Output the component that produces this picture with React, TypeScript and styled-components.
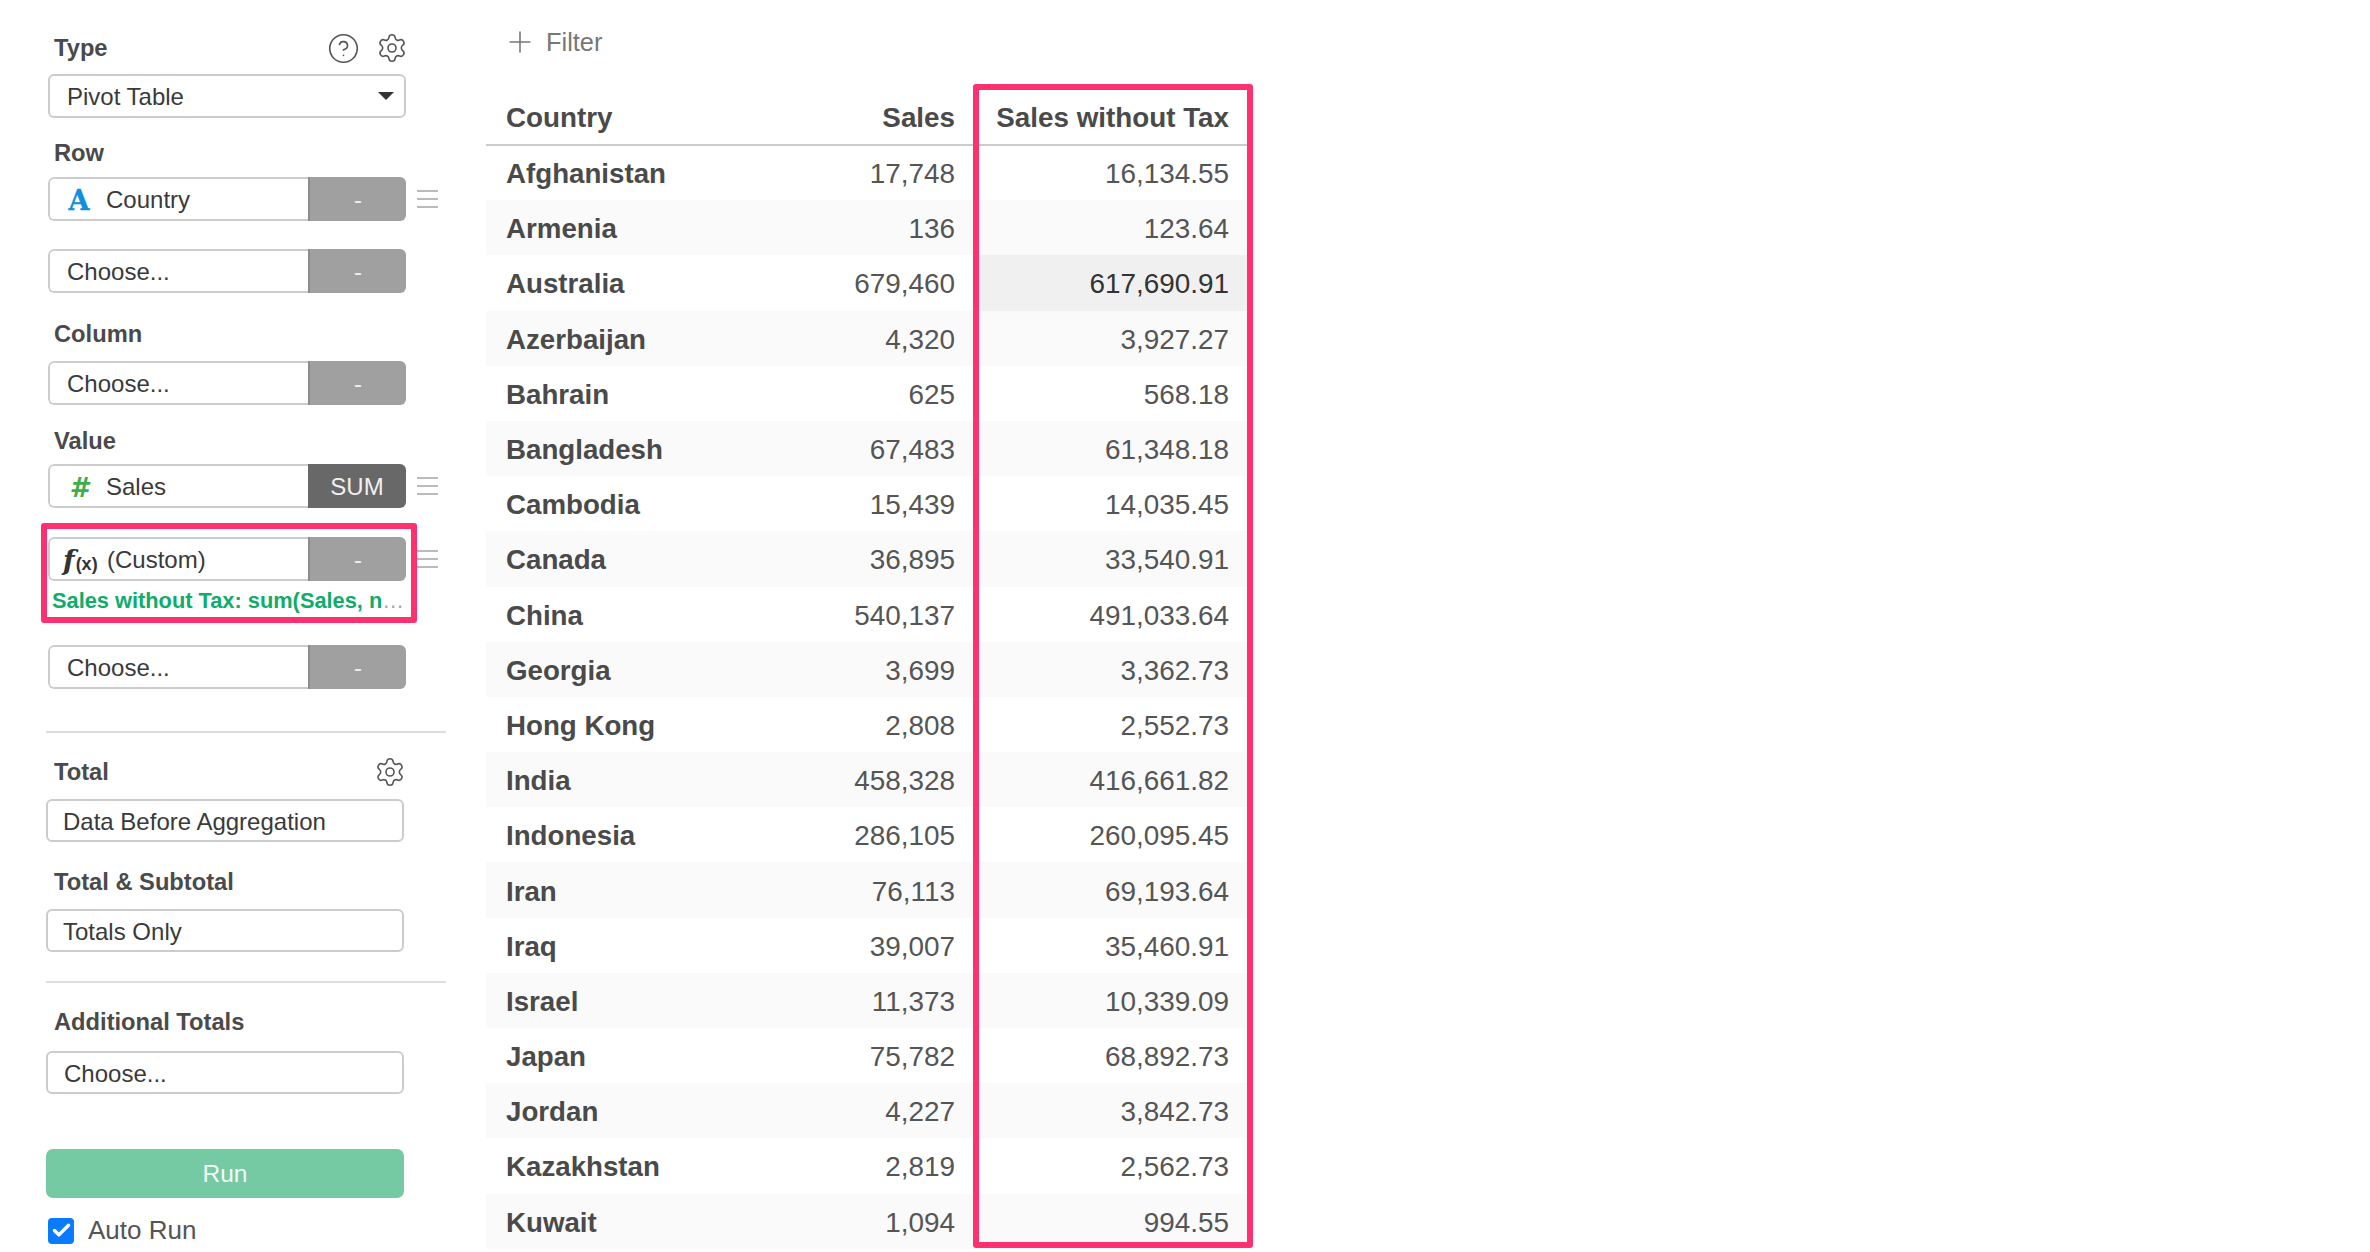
import React from "react";
import styled, { createGlobalStyle } from "styled-components";
import { Check, CircleHelp, Plus, Settings } from "lucide-react";

const Global = createGlobalStyle`
  html, body { margin: 0; padding: 0; background: #fff; }
  body { font-family: "Liberation Sans", Arial, sans-serif; color: #4a4a4a; }
`;

const Page = styled.div`
  display: flex;
  width: 2370px;
  height: 1252px;
  overflow: hidden;
  padding-left: 46px;
  box-sizing: border-box;
`;

const Sidebar = styled.aside`
  width: 400px;
  flex: none;
  padding-top: 34px;
`;

const LabelRow = styled.div<{ $top?: number; $bottom: number; $right: number }>`
  display: flex;
  align-items: center;
  justify-content: space-between;
  height: 28px;
  margin: ${(p) => p.$top ?? 0}px ${(p) => p.$right}px ${(p) => p.$bottom}px 8px;
`;

const Label = styled.div<{ $top?: number; $bottom?: number; $flush?: boolean }>`
  font-size: 23.7px;
  font-weight: 700;
  height: 28px;
  line-height: 28px;
  color: #4a4a4a;
  margin: ${(p) => p.$top ?? 0}px 0 ${(p) => p.$bottom ?? 0}px ${(p) => (p.$flush ? 0 : 8)}px;
`;

const IconGroup = styled.div`
  display: flex;
  align-items: center;
  gap: 16px;
  color: #555;
`;

const SelectBox = styled.div<{ $top?: number; $left?: number; $h?: number; $pad?: number }>`
  position: relative;
  box-sizing: border-box;
  width: 358px;
  height: ${(p) => p.$h ?? 44}px;
  margin: ${(p) => p.$top ?? 0}px 0 0 ${(p) => p.$left ?? 0}px;
  padding: 2px 0 0 ${(p) => p.$pad ?? 17}px;
  display: flex;
  align-items: center;
  border: 2px solid #ccc;
  border-radius: 6px;
  background: #fff;
  font-size: 24px;
  color: #3a3a3a;
`;

const Caret = styled.span`
  position: absolute;
  right: 10px;
  top: 16px;
  width: 0;
  height: 0;
  border-left: 8px solid transparent;
  border-right: 8px solid transparent;
  border-top: 8px solid #333;
`;

const FieldRow = styled.div<{ $top?: number }>`
  position: relative;
  display: flex;
  align-items: center;
  gap: 11px;
  margin: ${(p) => p.$top ?? 0}px 0 0 2px;
`;

const Field = styled.div`
  display: flex;
  width: 358px;
  height: 44px;
  flex: none;
  box-sizing: border-box;
  border-radius: 6px;
  overflow: hidden;
`;

const FieldMain = styled.div<{ $pad?: number }>`
  flex: 1;
  display: flex;
  align-items: center;
  box-sizing: border-box;
  padding: 2px 0 0 ${(p) => p.$pad ?? 17}px;
  border: 2px solid #ccc;
  border-right: 0;
  border-radius: 6px 0 0 6px;
  font-size: 24px;
  color: #3a3a3a;
`;

const AggButton = styled.div<{ $active?: boolean }>`
  width: 98px;
  flex: none;
  box-sizing: border-box;
  padding-top: 2px;
  display: flex;
  align-items: center;
  justify-content: center;
  background: ${(p) => (p.$active ? "#686868" : "#a0a0a0")};
  border-left: ${(p) => (p.$active ? "0" : "2px solid #8c8c8c")};
  color: ${(p) => (p.$active ? "#f0f0f0" : "#eeeeee")};
  font-size: 24px;
`;

const TypeIcon = styled.span`
  display: inline-flex;
  justify-content: center;
  width: 22px;
  margin-right: 16px;
  line-height: 1;
`;

const AttrGlyph = styled(TypeIcon)`
  font-family: "DejaVu Serif", serif;
  font-weight: 700;
  font-size: 27px;
  color: #0f8fdc;
  -webkit-text-stroke: 0.4px #0f8fdc;
`;

const NumGlyph = styled(TypeIcon)`
  font-family: "DejaVu Sans", sans-serif;
  font-weight: 700;
  font-style: italic;
  font-size: 27px;
  color: #3fae49;
`;

const FxGlyph = styled.span`
  display: inline-flex;
  align-items: baseline;
  width: 44px;
  line-height: 1;
  color: #333;
`;

const FxF = styled.span`
  font-family: "DejaVu Serif", serif;
  font-style: italic;
  font-weight: 700;
  font-size: 27px;
  margin-right: 1px;
`;

const FxX = styled.span`
  font-family: "Liberation Sans", sans-serif;
  font-weight: 700;
  font-size: 18px;
`;

const Handle = styled.svg`
  flex: none;
  width: 21px;
  height: 18px;
  display: block;
`;

const DragHandle = () => (
  <Handle viewBox="0 0 21 18">
    <rect x="0" y="0" width="21" height="2" fill="#bbb" />
    <rect x="0" y="8" width="21" height="2" fill="#bbb" />
    <rect x="0" y="16" width="21" height="2" fill="#bbb" />
  </Handle>
);

const CustomBlock = styled.div`
  position: relative;
  margin-top: 29px;
`;

const Formula = styled.div`
  margin: 7px 0 0 6px;
  font-size: 21.8px;
  font-weight: 700;
  line-height: 26px;
  color: #10ac6c;
  white-space: nowrap;
`;

const FormulaMore = styled.span`
  font-weight: 400;
  color: #a5a5a5;
`;

const PinkFrame = styled.div`
  position: absolute;
  box-sizing: border-box;
  border: 6px solid #fd3070;
  border-radius: 3px;
  pointer-events: none;
`;

const SidebarFrame = styled(PinkFrame)`
  left: -5px;
  top: -14px;
  width: 376px;
  height: 100px;
`;

const Divider = styled.hr<{ $top: number }>`
  border: 0;
  height: 2px;
  background: #ddd;
  margin: ${(p) => p.$top}px 0 0;
`;

const RunButton = styled.button`
  display: block;
  width: 358px;
  height: 49px;
  margin-top: 55px;
  padding: 0;
  border: 0;
  border-radius: 7px;
  background: #75c9a3;
  color: #f4fbf8;
  font-family: inherit;
  font-size: 24.5px;
`;

const AutoRun = styled.label`
  display: flex;
  align-items: center;
  gap: 14px;
  margin: 17px 0 0 2px;
  font-size: 26px;
  color: #555;
`;

const CheckBox = styled.span`
  width: 26px;
  height: 26px;
  border-radius: 4px;
  background: #0a7aff;
  color: #fff;
  display: flex;
  align-items: center;
  justify-content: center;
`;

const Main = styled.main`
  margin-left: 40px;
  padding-top: 25px;
  width: 761px;
  flex: none;
`;

const FilterRow = styled.div`
  display: flex;
  align-items: center;
  gap: 9px;
  height: 34px;
  padding-left: 17px;
  font-size: 25.4px;
  color: #777;
`;

const TableWrap = styled.div`
  position: relative;
  margin-top: 31px;
`;

const RowGrid = styled.div`
  display: grid;
  grid-template-columns: 1fr 200px 274px;
`;

const HeaderRow = styled(RowGrid)`
  height: 56px;
  box-sizing: border-box;
  padding-top: 2px;
  border-bottom: 2px solid #ccc;
  align-items: center;
  font-size: 27.8px;
  font-weight: 700;
`;

const Rows = styled.div`
  margin-top: -1px;
`;

const DataRow = styled(RowGrid)`
  height: 55.2px;
  &:nth-child(even) { background: #fafafa; }
`;

const HeadCell = styled.div<{ $num?: boolean }>`
  text-align: ${(p) => (p.$num ? "right" : "left")};
  padding: ${(p) => (p.$num ? "0 18px 0 0" : "0 0 0 20px")};
`;

const NameCell = styled.div`
  display: flex;
  align-items: center;
  padding: 3px 0 0 20px;
  font-size: 27.7px;
  font-weight: 700;
  color: #4a4a4a;
`;

const NumCell = styled.div<{ $hot?: boolean }>`
  display: flex;
  align-items: center;
  justify-content: flex-end;
  padding: 3px 18px 0 0;
  font-size: 27.9px;
  color: ${(p) => (p.$hot ? "#333" : "#555")};
  background: ${(p) => (p.$hot ? "#f0f0f0" : "transparent")};
`;

const TableFrame = styled(PinkFrame)`
  top: -6px;
  right: -6px;
  bottom: 1px;
  width: 280px;
`;

const data: [string, string, string][] = [
  ["Afghanistan", "17,748", "16,134.55"],
  ["Armenia", "136", "123.64"],
  ["Australia", "679,460", "617,690.91"],
  ["Azerbaijan", "4,320", "3,927.27"],
  ["Bahrain", "625", "568.18"],
  ["Bangladesh", "67,483", "61,348.18"],
  ["Cambodia", "15,439", "14,035.45"],
  ["Canada", "36,895", "33,540.91"],
  ["China", "540,137", "491,033.64"],
  ["Georgia", "3,699", "3,362.73"],
  ["Hong Kong", "2,808", "2,552.73"],
  ["India", "458,328", "416,661.82"],
  ["Indonesia", "286,105", "260,095.45"],
  ["Iran", "76,113", "69,193.64"],
  ["Iraq", "39,007", "35,460.91"],
  ["Israel", "11,373", "10,339.09"],
  ["Japan", "75,782", "68,892.73"],
  ["Jordan", "4,227", "3,842.73"],
  ["Kazakhstan", "2,819", "2,562.73"],
  ["Kuwait", "1,094", "994.55"],
];

export default function App() {
  return (
    <Page>
      <Global />
      <Sidebar>
        <LabelRow $bottom={12} $right={38}>
          <Label $flush>Type</Label>
          <IconGroup>
            <CircleHelp size={33} strokeWidth={1.2} />
            <Settings size={32} strokeWidth={1.2} />
          </IconGroup>
        </LabelRow>
        <SelectBox $left={2}>
          Pivot Table
          <Caret />
        </SelectBox>

        <Label $top={21} $bottom={10}>Row</Label>
        <FieldRow>
          <Field>
            <FieldMain $pad={18}>
              <AttrGlyph>A</AttrGlyph>
              Country
            </FieldMain>
            <AggButton>-</AggButton>
          </Field>
          <DragHandle />
        </FieldRow>
        <FieldRow $top={28}>
          <Field>
            <FieldMain>Choose...</FieldMain>
            <AggButton>-</AggButton>
          </Field>
        </FieldRow>

        <Label $top={27} $bottom={13}>Column</Label>
        <FieldRow>
          <Field>
            <FieldMain>Choose...</FieldMain>
            <AggButton>-</AggButton>
          </Field>
        </FieldRow>

        <Label $top={22} $bottom={9}>Value</Label>
        <FieldRow>
          <Field>
            <FieldMain $pad={18}>
              <NumGlyph>#</NumGlyph>
              Sales
            </FieldMain>
            <AggButton $active>SUM</AggButton>
          </Field>
          <DragHandle />
        </FieldRow>

        <CustomBlock>
          <FieldRow>
            <Field>
              <FieldMain $pad={13}>
                <FxGlyph>
                  <FxF>f</FxF>
                  <FxX>(x)</FxX>
                </FxGlyph>
                (Custom)
              </FieldMain>
              <AggButton>-</AggButton>
            </Field>
            <DragHandle />
          </FieldRow>
          <Formula>
            Sales without Tax: sum(Sales, n<FormulaMore>…</FormulaMore>
          </Formula>
          <SidebarFrame />
        </CustomBlock>

        <FieldRow $top={31}>
          <Field>
            <FieldMain>Choose...</FieldMain>
            <AggButton>-</AggButton>
          </Field>
        </FieldRow>

        <Divider $top={42} />

        <LabelRow $top={25} $bottom={13} $right={40}>
          <Label $flush>Total</Label>
          <IconGroup>
            <Settings size={32} strokeWidth={1.2} />
          </IconGroup>
        </LabelRow>
        <SelectBox $h={43} $pad={15}>Data Before Aggregation</SelectBox>

        <Label $top={26} $bottom={13}>Total &amp; Subtotal</Label>
        <SelectBox $h={43} $pad={15}>Totals Only</SelectBox>

        <Divider $top={29} />

        <Label $top={25} $bottom={15}>Additional Totals</Label>
        <SelectBox $h={43} $pad={16}>Choose...</SelectBox>

        <RunButton>Run</RunButton>
        <AutoRun>
          <CheckBox>
            <Check size={21} strokeWidth={4} />
          </CheckBox>
          Auto Run
        </AutoRun>
      </Sidebar>

      <Main>
        <FilterRow>
          <Plus size={34} strokeWidth={1.1} />
          Filter
        </FilterRow>
        <TableWrap>
          <HeaderRow>
            <HeadCell>Country</HeadCell>
            <HeadCell $num>Sales</HeadCell>
            <HeadCell $num>Sales without Tax</HeadCell>
          </HeaderRow>
          <Rows>
            {data.map(([name, sales, net]) => (
              <DataRow key={name}>
                <NameCell>{name}</NameCell>
                <NumCell>{sales}</NumCell>
                <NumCell $hot={name === "Australia"}>{net}</NumCell>
              </DataRow>
            ))}
          </Rows>
          <TableFrame />
        </TableWrap>
      </Main>
    </Page>
  );
}
